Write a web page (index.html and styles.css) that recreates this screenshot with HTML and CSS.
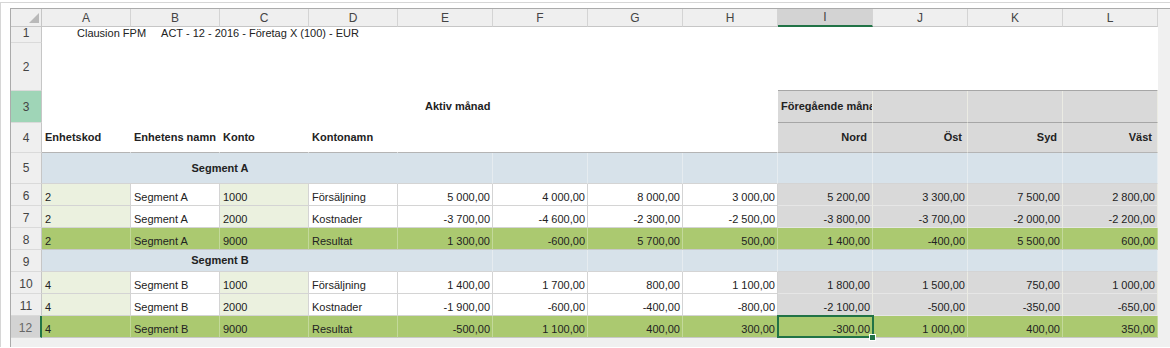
FILE: index.html
```html
<!DOCTYPE html>
<html lang="sv">
<head>
<meta charset="UTF-8">
<title>Clausion FPM - rapport</title>
<link rel="stylesheet" href="styles.css">
</head>
<body>

<div class="frame">
<div class="sheet">
	<div class="grid">
		<!-- column headers -->
		<div class="corner"><span class="tri"></span></div>
		<div class="ch">A</div><div class="ch">B</div><div class="ch">C</div><div class="ch">D</div>
		<div class="ch">E</div><div class="ch">F</div><div class="ch">G</div><div class="ch">H</div>
		<div class="ch sel">I</div><div class="ch">J</div><div class="ch">K</div><div class="ch">L</div>

		<!-- 1 -->
		<div class="rh">1</div>
		<div class="c blank span12 title"><span class="app">Clausion FPM</span><span>ACT - 12 - 2016 - Företag X (100) - EUR</span></div>

		<!-- 2 -->
		<div class="rh">2</div>
		<div class="c blank span8"></div>
		<div class="c blank span4 edge"></div>

		<!-- 3 -->
		<div class="rh hl">3</div>
		<div class="c blank span4 mid"></div>
		<div class="c blank span4 mid b active">Aktiv månad</div>
		<div class="c gr mid b prev dark">Föregående månad</div>
		<div class="c gr dark"></div><div class="c gr dark"></div><div class="c gr dark"></div>

		<!-- 4 -->
		<div class="rh">4</div>
		<div class="c blank mid b under">Enhetskod</div>
		<div class="c blank mid b under">Enhetens namn</div>
		<div class="c blank mid b under">Konto</div>
		<div class="c blank mid b under">Kontonamn</div>
		<div class="c blank span4 under"></div>
		<div class="c gr mid b r hdr under">Nord</div>
		<div class="c gr mid b r hdr under">Öst</div>
		<div class="c gr mid b r hdr under">Syd</div>
		<div class="c gr mid b r hdr under">Väst</div>

		<!-- 5 -->
		<div class="rh">5</div>
		<div class="c seg span4 mid b ctr">Segment A</div>
		<div class="c seg"></div><div class="c seg"></div><div class="c seg"></div><div class="c seg"></div>
		<div class="c seg"></div><div class="c seg"></div><div class="c seg"></div><div class="c seg"></div>

		<!-- 6 -->
		<div class="rh">6</div>
		<div class="c pale">2</div><div class="c wh">Segment A</div><div class="c pale">1000</div><div class="c wh">Försäljning</div>
		<div class="c wh r">5 000,00</div><div class="c wh r">4 000,00</div><div class="c wh r">8 000,00</div><div class="c wh r">3 000,00</div>
		<div class="c gr r">5 200,00</div><div class="c gr r">3 300,00</div><div class="c gr r">7 500,00</div><div class="c gr r">2 800,00</div>

		<!-- 7 -->
		<div class="rh">7</div>
		<div class="c pale">2</div><div class="c wh">Segment A</div><div class="c pale">2000</div><div class="c wh">Kostnader</div>
		<div class="c wh r">-3 700,00</div><div class="c wh r">-4 600,00</div><div class="c wh r">-2 300,00</div><div class="c wh r">-2 500,00</div>
		<div class="c gr r">-3 800,00</div><div class="c gr r">-3 700,00</div><div class="c gr r">-2 000,00</div><div class="c gr r">-2 200,00</div>

		<!-- 8 -->
		<div class="rh">8</div>
		<div class="c res">2</div><div class="c res">Segment A</div><div class="c res">9000</div><div class="c res">Resultat</div>
		<div class="c res r">1 300,00</div><div class="c res r">-600,00</div><div class="c res r">5 700,00</div><div class="c res r">500,00</div>
		<div class="c res r">1 400,00</div><div class="c res r">-400,00</div><div class="c res r">5 500,00</div><div class="c res r">600,00</div>

		<!-- 9 -->
		<div class="rh">9</div>
		<div class="c seg span4 mid b ctr">Segment B</div>
		<div class="c seg"></div><div class="c seg"></div><div class="c seg"></div><div class="c seg"></div>
		<div class="c seg"></div><div class="c seg"></div><div class="c seg"></div><div class="c seg"></div>

		<!-- 10 -->
		<div class="rh">10</div>
		<div class="c pale">4</div><div class="c wh">Segment B</div><div class="c pale">1000</div><div class="c wh">Försäljning</div>
		<div class="c wh r">1 400,00</div><div class="c wh r">1 700,00</div><div class="c wh r">800,00</div><div class="c wh r">1 100,00</div>
		<div class="c gr r">1 800,00</div><div class="c gr r">1 500,00</div><div class="c gr r">750,00</div><div class="c gr r">1 000,00</div>

		<!-- 11 -->
		<div class="rh">11</div>
		<div class="c pale">4</div><div class="c wh">Segment B</div><div class="c pale">2000</div><div class="c wh">Kostnader</div>
		<div class="c wh r">-1 900,00</div><div class="c wh r">-600,00</div><div class="c wh r">-400,00</div><div class="c wh r">-800,00</div>
		<div class="c gr r">-2 100,00</div><div class="c gr r">-500,00</div><div class="c gr r">-350,00</div><div class="c gr r">-650,00</div>

		<!-- 12 -->
		<div class="rh sel">12</div>
		<div class="c res">4</div><div class="c res">Segment B</div><div class="c res">9000</div><div class="c res">Resultat</div>
		<div class="c res r">-500,00</div><div class="c res r">1 100,00</div><div class="c res r">400,00</div><div class="c res r">300,00</div>
		<div class="c res r cursor">-300,00</div><div class="c res r">1 000,00</div><div class="c res r">400,00</div><div class="c res r">350,00</div>
	</div>
</div>
</div>

</body>
</html>
```

FILE: styles.css
```css
html, body {
	margin: 0;
	padding: 0;
	background: #fff;
	font-family: "Liberation Sans", Arial, sans-serif;
	color: #222;
}

.frame {
	margin-top: 2px;
	border-top: 1px solid #d6d6d6;
	border-left: 1px solid #d6d6d6;
	padding: 5px 0 0 9px;
	height: 345px;
	box-sizing: border-box;
}
.sheet {
	height: 340px;
	background: #f0f0f0;
	border-top: 1px solid #ababab;
	border-left: 1px solid #ababab;
	overflow: hidden;
}
.grid {
	display: grid;
	grid-template-columns: 31px repeat(4, 89px) repeat(8, 95px);
	grid-template-rows: 18px 16px 48px 32px 30px 31px repeat(7, 22px);
	width: 1147px;
}

/* headers */
.corner, .ch, .rh {
	background: #efefef;
	color: #444;
	font-size: 12px;
	box-sizing: border-box;
	display: flex;
	justify-content: center;
}
.corner {
	border-right: 1px solid #c6c6c6;
	border-bottom: 1px solid #c6c6c6;
	justify-content: flex-end;
	align-items: flex-end;
	padding: 0 2px 3px 0;
}
.tri {
	width: 0;
	height: 0;
	border-left: 10px solid transparent;
	border-bottom: 10px solid #b9b9b9;
}
.ch {
	align-items: center;
	border-right: 1px solid #d4d4d4;
	border-bottom: 1px solid #c6c6c6;
}
.ch.sel {
	background: #d3d3d3;
	border-bottom: 2px solid #217346;
}
.rh {
	align-items: flex-end;
	padding-bottom: 2px;
	line-height: 14px;
	border-right: 1px solid #c6c6c6;
	border-bottom: 1px solid #dadada;
}
.rh.hl {
	background: #9fd5b7;
	align-items: center;
	padding: 0;
}
.rh.sel {
	background: #d3d3d3;
	color: #666;
	border-right: 2px solid #217346;
}
.grid > .rh:nth-child(n+15):nth-child(-n+40) {
	align-items: center;
	padding: 0;
}

/* cells */
.c {
	box-sizing: border-box;
	display: flex;
	align-items: flex-end;
	padding: 0 2px 1px 3px;
	font-size: 11px;
	line-height: 13px;
	white-space: nowrap;
	border-right: 1px solid #d4d4d4;
	border-bottom: 1px solid #d4d4d4;
	min-width: 0;
}
.span4 { grid-column: span 4; }
.span8 { grid-column: span 8; }
.span12 { grid-column: span 12; }
.mid { align-items: center; padding-bottom: 0; }
.b { font-weight: bold; }
.r { justify-content: flex-end; }
.ctr { justify-content: center; }

.blank {
	background: #fff;
	border-color: #fff;
}
.title {
	padding-left: 35px;
	padding-bottom: 2px;
}
.title .app {
	margin-right: 15px;
}
.edge { border-bottom-color: #a6a6a6; }
.active { padding-left: 27px; }
.under { border-bottom-color: #b4b4b4; }

.gr {
	background: #d9d9d9;
	border-right-color: #ebebe3;
	border-bottom-color: #e6e6e6;
}
.gr.dark { border-bottom-color: #a6a6a6; }
.gr.under { border-bottom-color: #b4b4b4; }
.prev { overflow: hidden; }
.hdr { padding-right: 5px; }

.seg {
	background: #d7e2ea;
	border-right-color: #e6ecf0;
	border-bottom-color: #d4d4d4;
}
.seg.span4 { border-right-color: #d7e2ea; }
.pale { background: #ebf1df; }
.wh { background: #fff; }
.res {
	background: #abc970;
	border-right-color: #c3d99a;
	border-bottom-color: #c8c8c8;
}

.cursor {
	position: relative;
}
.cursor::after {
	content: "";
	position: absolute;
	top: -1px;
	left: -1px;
	right: -2px;
	bottom: -1px;
	border: 2px solid #217346;
	z-index: 2;
}
.cursor::before {
	content: "";
	position: absolute;
	right: -4px;
	bottom: -4px;
	width: 5px;
	height: 5px;
	background: #217346;
	border: 1px solid #fff;
	z-index: 3;
}
```
